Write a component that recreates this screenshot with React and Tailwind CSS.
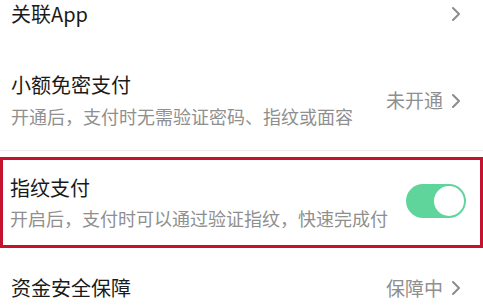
import React from "react";

const Chevron = () => (
  <svg width="10" height="16" viewBox="0 0 10 16" className="shrink-0">
    <polyline points="2,2 8,8 2,14" fill="none" stroke="#8c8c8c" strokeWidth="2" strokeLinecap="round" strokeLinejoin="round" />
  </svg>
);

const Toggle = () => (
  <div className="w-[60px] h-[34px] rounded-full bg-[#5fd59c] flex items-center justify-end pr-[2px]">
    <div className="w-[30px] h-[30px] rounded-full bg-white" />
  </div>
);

export default function App() {
  return (
    <div
      className="w-[483px] h-[308px] bg-white overflow-hidden"
      style={{ fontFamily: '"Noto Sans CJK SC", "Noto Sans", sans-serif' }}
    >
      {/* 关联App */}
      <div className="h-[58px] flex items-start justify-between pl-[11px] pr-[22px]">
        <span className="text-[20px] leading-[28px] text-[#1a1a1a]">关联App</span>
        <div className="h-[28px] flex items-center"><Chevron /></div>
      </div>

      {/* 小额免密支付 */}
      <div className="h-[92px] flex items-start justify-between pl-[11px] pr-[22px] pt-[13px]">
        <div className="flex flex-col gap-[4px]">
          <span className="text-[20px] leading-[28px] text-[#1a1a1a]">小额免密支付</span>
          <span className="text-[18px] leading-[27px] text-[#8f8f8f] whitespace-nowrap">开通后，支付时无需验证密码、指纹或面容</span>
        </div>
        <div className="h-[59px] flex items-center gap-[8px]">
          <span className="text-[19px] text-[#8f8f8f]">未开通</span>
          <Chevron />
        </div>
      </div>

      <div className="h-px bg-[#ececec]" />

      <div className="h-[6px]" />

      {/* 指纹支付 */}
      <div className="h-[91px] border-[3px] border-[#c4122f] flex items-center justify-between pl-[7px] pr-[14px]">
        <div className="flex flex-col gap-[3px]">
          <span className="text-[20px] leading-[28px] text-[#1a1a1a]">指纹支付</span>
          <span className="text-[18px] leading-[27px] text-[#8f8f8f] whitespace-nowrap">开启后，支付时可以通过验证指纹，快速完成付</span>
        </div>
        <div className="-mt-[4px] shrink-0"><Toggle /></div>
      </div>

      {/* 资金安全保障 */}
      <div className="flex items-center justify-between pl-[11px] pr-[22px] pt-[26px]">
        <span className="text-[20px] leading-[28px] text-[#1a1a1a]">资金安全保障</span>
        <div className="flex items-center gap-[8px]">
          <span className="text-[19px] text-[#8f8f8f]">保障中</span>
          <Chevron />
        </div>
      </div>
    </div>
  );
}
